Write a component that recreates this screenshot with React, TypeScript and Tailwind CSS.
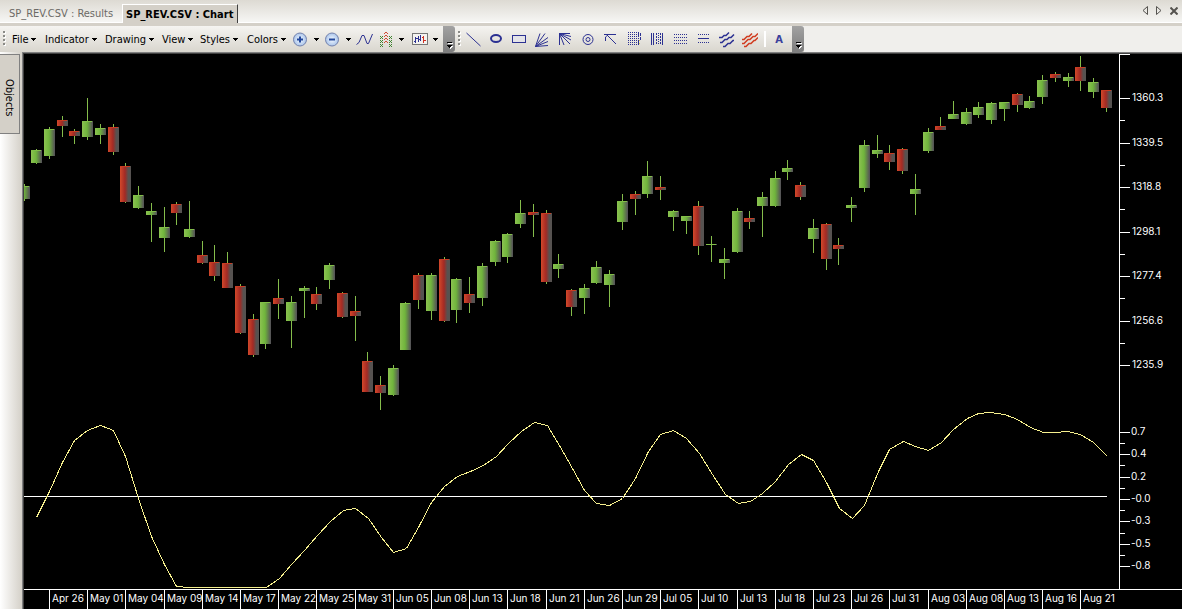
import type { ReactNode } from 'react'

type Candle = {
  x: number
  top: number
  bottom: number
  high: number
  low: number
  up: boolean
}

// x, body top, body bottom, high, low, 1 = up / 0 = down
const candles: Candle[] = [
  [19, 186, 199, 184, 201, 1], [31, 150, 163, 149, 164, 1], [44, 129, 156, 127, 159, 1],
  [57, 120, 126, 116, 137, 0], [69, 131, 136, 129, 144, 0], [82, 121, 137, 98, 140, 1],
  [95, 128, 135, 124, 144, 1], [108, 127, 152, 124, 155, 0], [120, 166, 202, 163, 203, 0],
  [133, 195, 208, 186, 209, 1], [146, 211, 215, 203, 242, 1], [159, 227, 238, 207, 252, 1],
  [171, 204, 213, 202, 225, 0], [184, 229, 237, 201, 238, 1], [197, 255, 263, 241, 264, 0],
  [209, 262, 276, 245, 281, 0], [222, 263, 288, 252, 288, 0], [235, 286, 333, 284, 334, 0],
  [248, 319, 355, 314, 357, 0], [260, 302, 344, 302, 349, 1], [273, 298, 304, 279, 319, 0],
  [286, 302, 321, 296, 348, 1], [299, 288, 291, 286, 318, 1], [311, 294, 304, 287, 310, 0],
  [324, 265, 280, 263, 289, 1], [337, 293, 317, 292, 318, 0], [350, 311, 316, 296, 341, 0],
  [362, 361, 392, 352, 392, 0], [375, 385, 393, 376, 410, 0], [388, 368, 395, 365, 396, 1],
  [400, 303, 350, 302, 350, 1], [413, 275, 300, 273, 309, 0], [426, 275, 311, 273, 320, 1],
  [439, 259, 321, 257, 322, 0], [451, 279, 310, 278, 323, 1], [464, 294, 303, 277, 313, 0],
  [477, 266, 298, 263, 306, 1], [490, 241, 262, 240, 266, 1], [502, 234, 257, 233, 263, 1],
  [515, 213, 224, 200, 228, 1], [528, 212, 215, 204, 237, 0], [541, 213, 282, 210, 284, 0],
  [553, 264, 269, 254, 278, 1], [566, 290, 307, 289, 316, 0], [579, 288, 298, 284, 314, 1],
  [591, 267, 283, 261, 284, 1], [604, 274, 285, 270, 307, 1], [617, 201, 222, 194, 230, 1],
  [630, 194, 199, 191, 215, 0], [642, 176, 194, 161, 198, 1], [655, 187, 190, 176, 200, 0],
  [668, 211, 217, 210, 231, 1], [681, 216, 221, 216, 234, 1], [693, 206, 246, 201, 255, 0],
  [706, 244, 245, 236, 262, 1], [719, 259, 263, 248, 279, 1], [732, 211, 252, 208, 253, 1],
  [744, 218, 222, 211, 229, 0], [757, 197, 206, 192, 237, 1], [770, 178, 206, 171, 207, 1],
  [782, 168, 172, 160, 180, 1], [795, 185, 197, 182, 200, 0], [808, 228, 239, 219, 253, 1],
  [821, 224, 259, 223, 270, 0], [833, 245, 249, 238, 265, 0], [846, 205, 208, 197, 222, 1],
  [859, 145, 188, 140, 192, 1], [872, 150, 154, 135, 158, 1], [884, 153, 162, 145, 170, 0],
  [897, 149, 171, 148, 174, 0], [910, 189, 194, 174, 215, 1], [923, 132, 151, 128, 153, 1],
  [935, 126, 130, 117, 130, 0], [948, 114, 119, 101, 119, 1], [961, 112, 124, 108, 125, 1],
  [973, 107, 115, 102, 118, 1], [986, 103, 120, 102, 124, 1], [999, 102, 109, 102, 121, 1],
  [1012, 94, 105, 93, 112, 0], [1024, 101, 108, 96, 109, 1], [1037, 80, 97, 75, 104, 1],
  [1050, 74, 78, 72, 82, 0], [1063, 77, 81, 73, 87, 1], [1075, 67, 81, 56, 91, 0],
  [1088, 82, 92, 78, 98, 1], [1101, 90, 108, 90, 112, 0],
].map(([x, top, bottom, high, low, up]) => ({ x, top, bottom, high, low, up: up === 1 }))

const oscillator =
  '36,517 49,491 62,462 74,440 87,430 100,425 113,430 125,456 138,498 151,536 164,564 176,586 189,587 266,587 ' +
  '279,578 291,564 304,550 317,535 330,521 343,510 355,508 368,518 381,537 393,552 406,548 419,525 431,502 ' +
  '444,486 457,476 470,471 483,465 496,456 508,443 521,431 534,422 547,425 559,445 572,468 584,490 596,503 ' +
  '609,505 622,498 635,478 648,451 660,434 673,430 686,438 699,453 712,474 725,494 738,503 750,501 762,493 ' +
  '775,481 788,464 801,454 813,460 826,482 839,508 852,518 864,505 878,471 889,449 903,441 915,446 928,450 ' +
  '941,442 953,429 967,418 978,413 990,412 1004,414 1017,419 1030,427 1043,432 1055,432 1067,431 1080,434 ' +
  '1093,442 1107,456'

// plot area inside the chart: origin and size of its coordinate system
const PLOT = { x: 24, y: 54, width: 1095, height: 535 }

const scaleLabels: [number, string][] = [
  [98, '1360.3'], [143, '1339.5'], [187, '1318.8'], [232, '1298.1'],
  [276, '1277.4'], [321, '1256.6'], [365, '1235.9'],
  [432, '0.7'], [454, '0.4'], [477, '0.2'], [499, '-0.0'],
  [521, '-0.3'], [544, '-0.5'], [566, '-0.8'],
]

const minorTicks = [120, 165, 209, 254, 298, 343, 443, 465, 488, 510, 533, 555]

const dates: [number, string][] = [
  [49, 'Apr 26'], [87, 'May 01'], [125, 'May 04'], [164, 'May 09'], [202, 'May 14'],
  [240, 'May 17'], [278, 'May 22'], [316, 'May 25'], [355, 'May 31'], [393, 'Jun 05'],
  [431, 'Jun 08'], [469, 'Jun 13'], [507, 'Jun 18'], [546, 'Jun 21'], [584, 'Jun 26'],
  [622, 'Jun 29'], [660, 'Jul 05'], [698, 'Jul 10'], [737, 'Jul 13'], [775, 'Jul 18'],
  [813, 'Jul 23'], [851, 'Jul 26'], [889, 'Jul 31'], [928, 'Aug 03'], [966, 'Aug 08'],
  [1004, 'Aug 13'], [1042, 'Aug 16'], [1080, 'Aug 21'],
]

const plotX = (x: number) => `${((x - PLOT.x) / PLOT.width) * 100}%`
const plotY = (y: number) => `${((y - PLOT.y) / PLOT.height) * 100}%`

function Caret() {
  return (
    <svg width="5" height="3" shapeRendering="crispEdges" aria-hidden="true">
      <path d="M0 0h5v1H0zM1 1h3v1H1zM2 2h1v1H2z" />
    </svg>
  )
}

function MenuButton({ label, className }: { label: string; className: string }) {
  return (
    <button type="button" className={`flex shrink-0 items-center gap-[3px] pt-px ${className}`}>
      {label}
      <Caret />
    </button>
  )
}

function Grip({ className = '' }: { className?: string }) {
  return (
    <svg className={`shrink-0 ${className}`} width="3" height="16" shapeRendering="crispEdges" aria-hidden="true">
      {[0, 4, 8, 12].map((y) => (
        <g key={y}>
          <rect x="1" y={y + 1} width="2" height="2" fill="#fff" />
          <rect x="0" y={y} width="2" height="2" fill="#8a8a86" />
        </g>
      ))}
    </svg>
  )
}

function ToolbarEnd() {
  return (
    <button
      type="button"
      aria-label="Toolbar options"
      className="flex h-[26px] w-3 shrink-0 items-end justify-center rounded-r-[3px] bg-gradient-to-b from-[#a2a2a2] to-[#7d7d7d] pb-[3px]"
    >
      <svg width="7" height="8" shapeRendering="crispEdges" aria-hidden="true">
        <path d="M2 2h5v1H2zM2 5h5v1H2zM3 6h3v1H3zM4 7h1v1H4z" fill="#fff" />
        <path d="M1 1h5v1H1zM1 4h5v1H1zM2 5h3v1H2zM3 6h1v1H3z" fill="#000" />
      </svg>
    </button>
  )
}

function Tool({
  label,
  className = 'w-[23px]',
  children,
}: {
  label: string
  className?: string
  children: ReactNode
}) {
  return (
    <button type="button" aria-label={label} className={`flex h-6 shrink-0 items-center justify-center ${className}`}>
      <svg width="17" height="17" fill="none" stroke="#2c3192" aria-hidden="true">
        {children}
      </svg>
    </button>
  )
}

function DropTool({
  label,
  className,
  children,
}: {
  label: string
  className: string
  children: ReactNode
}) {
  return (
    <button type="button" aria-label={label} className={`flex h-6 shrink-0 items-center gap-[5px] ${className}`}>
      <svg width="17" height="17" fill="none" stroke="#2c3192" aria-hidden="true">
        {children}
      </svg>
      <Caret />
    </button>
  )
}

function ZoomGlyph({ plus = false }: { plus?: boolean }) {
  return (
    <>
      <circle cx="8" cy="8.5" r="6.5" fill="url(#lens)" stroke="#7482ad" />
      <path d={plus ? 'M5 8.5h6M8 5.5v6' : 'M5 8.5h6'} stroke="#23489c" strokeWidth="2" />
    </>
  )
}

function TabStrip() {
  return (
    <header className="flex h-[23px] items-end justify-between border-b border-white bg-gradient-to-b from-[#dddad3] to-[#f6f6f4]">
      <nav className="flex items-end" aria-label="Documents">
        <button type="button" className="h-[18px] w-[122px] pt-[2px] pl-[9px] text-left text-[#6c6a66]">
          SP_REV.CSV : Results
        </button>
        <button
          type="button"
          className="-mb-px h-[19px] border-t border-r border-l border-t-white border-r-[#404040] border-l-white bg-[#d4d0c8] pt-px pr-1 pl-[3px] font-bold whitespace-nowrap"
        >
          SP_REV.CSV : Chart
        </button>
      </nav>
      <div className="flex h-[21px] items-center gap-2 self-start pr-1">
        <button type="button" aria-label="Scroll left">
          <svg width="6" height="9" fill="none" stroke="#55534f">
            <path d="M5.5 0.5v8L1 4.5z" />
          </svg>
        </button>
        <button type="button" aria-label="Scroll right">
          <svg width="6" height="9" fill="none" stroke="#55534f">
            <path d="M0.5 0.5v8L5 4.5z" />
          </svg>
        </button>
        <button type="button" aria-label="Close">
          <svg width="8" height="8" fill="none" stroke="#55534f" strokeWidth="2">
            <path d="M0.5 0.5l7 7M7.5 0.5l-7 7" />
          </svg>
        </button>
      </div>
    </header>
  )
}

function Toolbar() {
  return (
    <div className="flex h-[29px] items-center overflow-hidden border-t-[3px] border-[#d4d0c8] bg-[#f0efec]">
      <div className="flex h-[26px] shrink-0 items-center bg-gradient-to-b from-[#f5f4f1] to-[#d9d6ce] pl-[3px]">
        <Grip className="mr-[6px]" />
        <MenuButton label="File" className="w-[33px]" />
        <MenuButton label="Indicator" className="w-[60px]" />
        <MenuButton label="Drawing" className="w-[57px]" />
        <MenuButton label="View" className="w-[38px]" />
        <MenuButton label="Styles" className="w-[47px]" />
        <MenuButton label="Colors" className="w-[45px]" />
        <DropTool label="Zoom in" className="w-8">
          <ZoomGlyph plus />
        </DropTool>
        <DropTool label="Zoom out" className="w-8">
          <ZoomGlyph />
        </DropTool>
        <Tool label="Line style" className="w-[17px]">
          <path d="M0.500 13.500L3 11.500L6 4.500H8L11 12.500H12.500L16.500 3" />
        </Tool>
        <DropTool label="Bar style" className="w-8 pl-1">
          <g shapeRendering="crispEdges">
            <path d="M3.500 5v11M5.500 5v11M12.500 5v11M14.500 5v11" stroke="#3f8430" strokeDasharray="1 1" />
            <path d="M4.500 6v9M13.500 6v9" stroke="#3f8430" strokeDasharray="1 3" />
            <path d="M9 1v11" stroke="#cf4a34" strokeDasharray="1 2" strokeWidth="2" />
            <path d="M7.500 2v10M10.500 2v10" stroke="#cf4a34" strokeDasharray="1 2" />
          </g>
        </DropTool>
        <DropTool label="Price style" className="w-[38px] pl-[6px]">
          <g shapeRendering="crispEdges">
            <rect x="1.500" y="2.500" width="15" height="11" stroke="#777" fill="#f3f2ef" />
            <path d="M4.500 6v6M3 10.500h1M7.500 5v6M5 7.500h3M9.500 4v6M8 8.500h1" />
            <path d="M12.500 5v7M11 6.500h2M13 9.500h2" stroke="#d03020" />
          </g>
        </DropTool>
        <ToolbarEnd />
      </div>
      <div className="flex h-[26px] shrink-0 items-center bg-gradient-to-b from-[#f5f4f1] to-[#d9d6ce] pl-[3px]">
        <Grip className="mr-px" />
        <Tool label="Trend line">
          <path d="M1.500 2l14 13" />
        </Tool>
        <Tool label="Ellipse">
          <ellipse cx="8" cy="7.500" rx="5" ry="3.500" strokeWidth="2" />
        </Tool>
        <Tool label="Rectangle">
          <rect x="1.500" y="4.500" width="13" height="7" fill="#e4e4e8" />
        </Tool>
        <Tool label="Fan">
          <path d="M1.500 15.500L6 2.500M1.500 15.500L11 2.500M1.500 15.500L14 6.500M1.500 15.500L14 10.500M1.500 15.500L14 14.500" />
        </Tool>
        <Tool label="Gann fan">
          <path d="M2.500 14V2.500H13M2.500 2.500L14 5.500M2.500 2.500L14 9M2.500 2.500L13 13M2.500 2.500L7 14" />
        </Tool>
        <Tool label="Circles">
          <circle cx="8" cy="8.500" r="5" />
          <circle cx="8" cy="8.500" r="2" />
        </Tool>
        <Tool label="Speed lines">
          <path d="M2.500 10V6L5.500 3.500H13M1 3.500H6M4 4L13 13" />
        </Tool>
        <Tool label="Grid">
          <g shapeRendering="crispEdges">
            {[2, 4, 6, 8, 10, 12, 14].map((y) => (
              <path key={y} d={`M2 ${y - 0.5}h12`} strokeDasharray="1 1" />
            ))}
            <path d="M12.500 1v5M14.500 2v3M14.500 6v3M12.500 10v4" />
            <path d="M13.500 9v1M13.500 12v1" stroke="#d8c84a" />
          </g>
        </Tool>
        <Tool label="Time zones">
          <g shapeRendering="crispEdges">
            <path d="M2.500 2v12M4.500 2v12M13.500 2v12" />
            <path d="M7.500 2v12M11.500 2v12" strokeDasharray="2 1" />
            <path d="M9.500 2v12" strokeDasharray="1 1" />
          </g>
        </Tool>
        <Tool label="Retracement">
          <path d="M2 3.500h13M2 6.500h13M2 9.500h13M2 12.500h13" strokeDasharray="1 1" shapeRendering="crispEdges" />
        </Tool>
        <Tool label="Extension">
          <g shapeRendering="crispEdges">
            <path d="M3 3.500h11M3 11.500h11" strokeDasharray="1 1" />
            <path d="M3 7.500h11" />
          </g>
        </Tool>
        <Tool label="Channel">
          <path
            d="M1 6.500h3l2-2h2l3-3M2 11.500h2l3-3h2l2-2h2l3-3M5 15.500h2l3-3h2l3-3h1"
            strokeWidth="1.5"
          />
        </Tool>
        <Tool label="Parallel channel">
          <path
            d="M1 8.500h2l3-3h2l3-3M1 12.500h2l4-4h2l3-3h2l3-3M3 15.500h2l3-3h2l3-3h1l3-3"
            stroke="#d03c20"
            strokeWidth="1.500"
          />
        </Tool>
        <span className="ml-[3px] h-4 w-[2px] shrink-0 bg-white" />
        <button type="button" className="h-6 w-[26px] shrink-0 pt-px font-bold text-[#3a409c]">
          A
        </button>
        <ToolbarEnd />
      </div>
    </div>
  )
}

function Plot() {
  return (
    <svg
      className="h-full min-w-0 flex-1"
      viewBox={`${PLOT.x} ${PLOT.y} ${PLOT.width} ${PLOT.height}`}
      preserveAspectRatio="none"
      shapeRendering="crispEdges"
      role="img"
      aria-label="Candlestick chart with oscillator"
    >
      {candles.map((c) => (
        <g key={c.x}>
          <rect x={c.x + 5} y={c.high} width="1" height={c.low - c.high} fill="#85bd4b" />
          <rect
            x={c.x}
            y={c.top}
            width="11"
            height={c.bottom - c.top}
            fill={c.up ? 'url(#up)' : 'url(#down)'}
          />
          <rect x={c.x} y={c.top} width="10" height="1" fill={c.up ? '#82bf48' : '#c83c22'} />
        </g>
      ))}
      <path d="M24 496.500H1107" stroke="#fff" />
      <polyline points={oscillator} transform="translate(0.5 0.5)" fill="none" stroke="#f6f08e" />
    </svg>
  )
}

function PriceScale() {
  return (
    <svg className="h-full w-[63px] shrink-0" shapeRendering="crispEdges">
      <path d="M0 0.500h11" stroke="#fff" />
      <line x1="0.5" x2="0.5" y1="0" y2="100%" stroke="#fff" />
      {minorTicks.map((y) => (
        <line key={y} x1="0" x2="6" y1={plotY(y + 0.5)} y2={plotY(y + 0.5)} stroke="#fff" />
      ))}
      {scaleLabels.map(([y, label]) => (
        <g key={y}>
          <line x1="0" x2="11" y1={plotY(y + 0.5)} y2={plotY(y + 0.5)} stroke="#fff" />
          <text x={y < 400 ? 13 : 12} y={plotY(y + 3)} fill="#fff">
            {label}
          </text>
        </g>
      ))}
    </svg>
  )
}

function DateScale() {
  return (
    <div className="flex h-5 border-t border-white">
      <svg className="h-full min-w-0 flex-1 overflow-visible" shapeRendering="crispEdges">
        {dates.map(([x, label]) => (
          <g key={x}>
            <line x1={plotX(x + 0.5)} x2={plotX(x + 0.5)} y1="0" y2="19" stroke="#fff" />
            <text x={plotX(x + 3)} y="12" fill="#fff">
              {label}
            </text>
          </g>
        ))}
      </svg>
      <div className="w-[63px] shrink-0" />
    </div>
  )
}

export default function App() {
  return (
    <div className="flex min-h-screen flex-col bg-[#d4d0c8] font-['DejaVu_Sans_Condensed','DejaVu_Sans',sans-serif] text-[11px] leading-4 text-black">
      <svg className="absolute h-0 w-0" aria-hidden="true">
        <defs>
          <linearGradient id="up">
            <stop offset="0" stopColor="#8cc251" />
            <stop offset="0.45" stopColor="#70b53c" />
            <stop offset="0.95" stopColor="#565656" />
          </linearGradient>
          <linearGradient id="down">
            <stop offset="0" stopColor="#d2482a" />
            <stop offset="0.45" stopColor="#a32a24" />
            <stop offset="0.75" stopColor="#565250" />
          </linearGradient>
          <radialGradient id="lens">
            <stop offset="0" stopColor="#f4f9ff" />
            <stop offset="1" stopColor="#a9c4ea" />
          </radialGradient>
        </defs>
      </svg>
      <TabStrip />
      <Toolbar />
      <div className="flex flex-1">
        <aside className="w-[22px] shrink-0 bg-gradient-to-r from-white to-[#d4d0c8] pt-[2px]">
          <button
            type="button"
            className="flex h-20 w-5 items-center justify-center border-t border-r border-b border-[#808080] bg-[#d4d0c8] pt-2 pr-px [writing-mode:vertical-rl]"
          >
            Objects
          </button>
        </aside>
        <main className="flex min-w-0 flex-1 flex-col border-t border-l border-[#808080] bg-black">
          <div className="flex min-w-0 flex-1 flex-col border-t border-l border-[#404040] font-['Inter','Liberation_Sans',sans-serif] text-[10px]">
            <div className="flex h-0 min-h-[300px] flex-1">
              <Plot />
              <PriceScale />
            </div>
            <DateScale />
          </div>
        </main>
      </div>
    </div>
  )
}
